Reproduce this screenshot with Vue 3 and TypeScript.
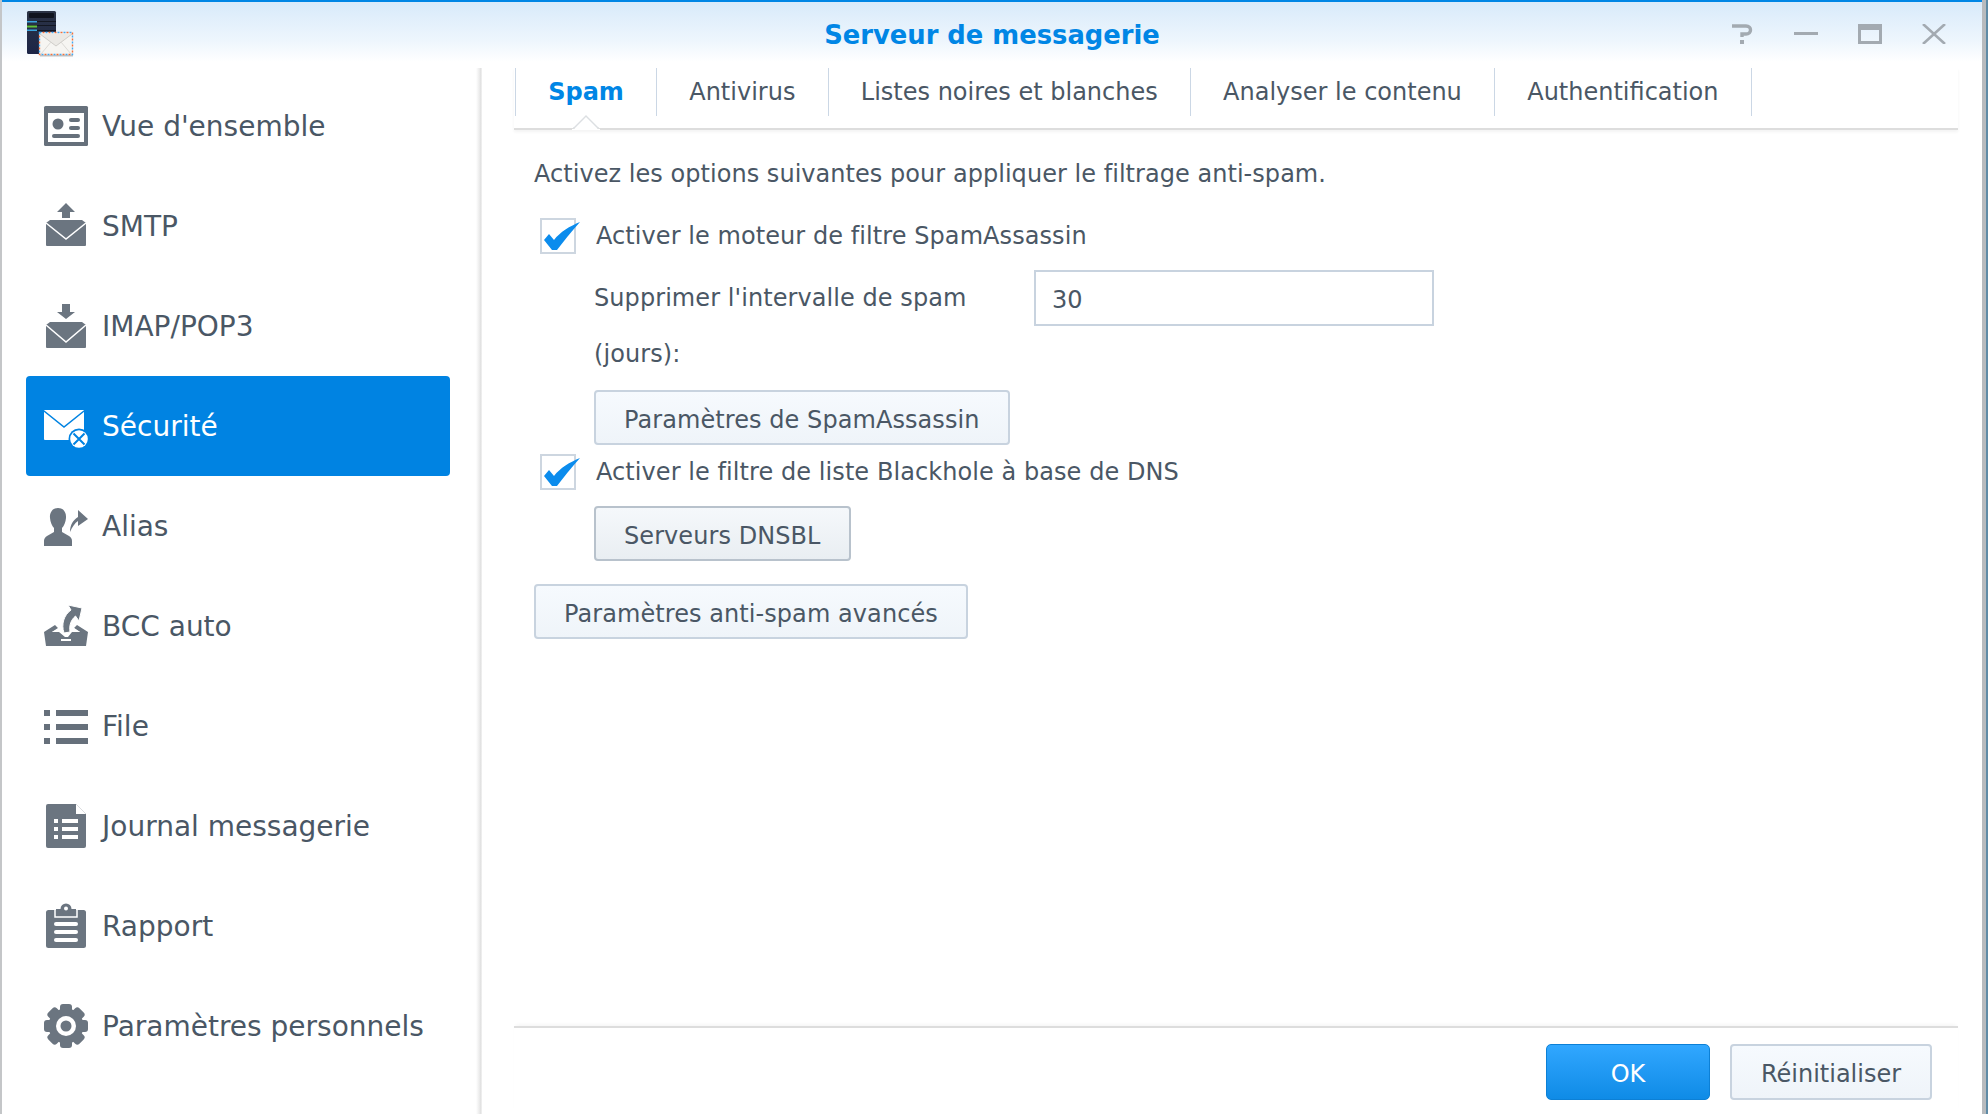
<script setup lang="ts">
interface NavItem { id: string; label: string }
const navItems: NavItem[] = [
  { id: 'overview', label: "Vue d'ensemble" },
  { id: 'smtp', label: 'SMTP' },
  { id: 'imap', label: 'IMAP/POP3' },
  { id: 'security', label: 'Sécurité' },
  { id: 'alias', label: 'Alias' },
  { id: 'bcc', label: 'BCC auto' },
  { id: 'queue', label: 'File' },
  { id: 'log', label: 'Journal messagerie' },
  { id: 'report', label: 'Rapport' },
  { id: 'settings', label: 'Paramètres personnels' },
]
const tabs: string[] = ['Spam', 'Antivirus', 'Listes noires et blanches', 'Analyser le contenu', 'Authentification']
</script>

<template>
  <div class="page">
    <div class="edge-left"></div>
    <div class="window">
      <header class="titlebar">
        <div class="logo-cell">
          <svg class="logo" width="48" height="46" viewBox="0 0 48 46">
            <defs>
              <linearGradient id="tower" x1="0" y1="0" x2="0" y2="1">
                <stop offset="0" stop-color="#2b3345" />
                <stop offset="1" stop-color="#1c2547" />
              </linearGradient>
            </defs>
            <rect x="1" y="0" width="29" height="43" rx="1.5" fill="url(#tower)" />
            <rect x="3" y="2" width="25" height="5" rx="1" fill="#10141f" />
            <rect x="1" y="10" width="29" height="1" fill="#131722" />
            <rect x="1" y="10" width="10" height="1.5" fill="#3ba3dd" />
            <rect x="1" y="14" width="29" height="1" fill="#131722" />
            <rect x="1" y="14.5" width="10" height="2" fill="#62c13a" />
            <rect x="1" y="19" width="29" height="1" fill="#131722" />
            <rect x="1" y="18.5" width="10" height="1.5" fill="#3ba3dd" />
            <rect x="13" y="21" width="34" height="23" fill="#f6f5f2" />
            <path d="M14 23 L30 35 L46 23" fill="#ebe9e5" stroke="#cfcdc9" stroke-width="1" />
            <path d="M15 43 L25 31 M45 43 L35 31" fill="none" stroke="#dcdad6" stroke-width="1" />
            <rect x="13.5" y="21.5" width="33" height="22" fill="none" stroke="#45a8ee" stroke-width="1.4" stroke-dasharray="2 4" />
            <rect x="13.5" y="21.5" width="33" height="22" fill="none" stroke="#f0703c" stroke-width="1.4" stroke-dasharray="2 4" stroke-dashoffset="3" />
            <rect x="14" y="44" width="33" height="1.5" fill="#8d8d8d" opacity=".5" />
          </svg>
        </div>
        <h1 class="title">Serveur de messagerie</h1>
        <div class="controls">
          <svg width="24" height="20" viewBox="0 0 24 20">
            <path d="M2 2 H16 C22 2 22 10 16 10 H12 V13" fill="none" stroke="#a3aab1" stroke-width="3.4" />
            <rect x="10" y="16" width="4" height="4" fill="#a3aab1" />
          </svg>
          <svg width="24" height="20" viewBox="0 0 24 20">
            <rect x="0" y="8" width="24" height="3" fill="#a3aab1" />
          </svg>
          <svg width="24" height="20" viewBox="0 0 24 20">
            <path d="M0 0 H24 V20 H0 Z M3 6 V17 H21 V6 Z" fill="#a3aab1" fill-rule="evenodd" />
          </svg>
          <svg width="24" height="20" viewBox="0 0 24 20">
            <path d="M1 0 L23 20 M23 0 L1 20" stroke="#a3aab1" stroke-width="2.6" fill="none" />
          </svg>
        </div>
      </header>

      <div class="body">
        <nav class="sidebar">
          <a
            v-for="item in navItems"
            :key="item.id"
            class="nav-item"
            :class="{ active: item.id === 'security' }"
          >
            <svg class="nav-icon" width="44" height="44" viewBox="0 0 44 44">
              <g v-if="item.id === 'overview'">
                <rect x="0" y="2" width="44" height="40" rx="1.5" fill="#66707b" />
                <rect x="4" y="9" width="36" height="29" fill="#fff" />
                <circle cx="14" cy="20" r="5.5" fill="#66707b" />
                <rect x="25" y="14" width="11" height="4" rx="2" fill="#66707b" />
                <rect x="25" y="22" width="11" height="4" rx="2" fill="#66707b" />
                <rect x="8" y="30" width="28" height="4" rx="2" fill="#66707b" />
              </g>
              <g v-else-if="item.id === 'smtp'">
                <path d="M22 -1 L31 8 H26 V14 H18 V8 H13 Z" fill="#6b7580" />
                <path d="M6 16 H38 L42 19 V41 a1 1 0 0 1 -1 1 H3 a1 1 0 0 1 -1 -1 V19 Z" fill="#6b7580" />
                <path d="M2 19 L22 35 L42 19" fill="none" stroke="#fff" stroke-width="1.6" />
              </g>
              <g v-else-if="item.id === 'imap'">
                <path d="M22 15 L31 8 H26 V0 H18 V8 H13 Z" fill="#6b7580" />
                <path d="M6 18 H38 L42 21 V43 a1 1 0 0 1 -1 1 H3 a1 1 0 0 1 -1 -1 V21 Z" fill="#6b7580" />
                <path d="M2 21 L22 38 L42 21" fill="none" stroke="#fff" stroke-width="1.6" />
              </g>
              <g v-else-if="item.id === 'security'">
                <rect x="0" y="6" width="40" height="30" rx="1" fill="#fff" />
                <path d="M0 7 L20 23 L40 7" fill="none" stroke="#0083e2" stroke-width="1.6" />
                <circle cx="35" cy="35" r="10.5" fill="#0083e2" />
                <circle cx="35" cy="35" r="8.8" fill="#fff" />
                <path d="M29.5 29.5 L40.5 40.5 M40.5 29.5 L29.5 40.5" stroke="#0083e2" stroke-width="2" />
              </g>
              <g v-else-if="item.id === 'alias'">
                <path d="M14 4 C20 4 22.5 9 22 14 C21.7 18 20 22 18 24 V28 L25 32 C27 33 28 35 28 37 V42 H0 V37 C0 35 1 33 3 32 L10 28 V24 C8 22 6.3 18 6 14 C5.5 9 8 4 14 4 Z" fill="#6b7580" />
                <path d="M26 28 C26 21 29 16 34 13 V6 L44 15 L34 22 V17 C31 19 28 23 26 28 Z" fill="#6b7580" />
              </g>
              <g v-else-if="item.id === 'bcc'">
                <path d="M0 28 L11 21 L14 24 L8 28 H36 L30 24 L33 21 L44 28 L42 42 H2 Z" fill="#6b7580" />
                <path d="M8 28 H15 L21 33 H24 L28 28 H36 L30 24 L15 24 Z" fill="#fff" />
                <path d="M24 1 L38 4 L35 17 L31.5 12 C27 16 25 21 26 28 L20 29 C17 20 20 11 27 6 Z" fill="#6b7580" stroke="#fff" stroke-width="1" />
                <rect x="17" y="35" width="10" height="2" fill="#fff" />
              </g>
              <g v-else-if="item.id === 'queue'" fill="#66707b">
                <rect x="0" y="6" width="6" height="6" />
                <rect x="12" y="6" width="32" height="6" />
                <rect x="0" y="20" width="6" height="6" />
                <rect x="12" y="20" width="32" height="6" />
                <rect x="0" y="34" width="6" height="6" />
                <rect x="12" y="34" width="32" height="6" />
              </g>
              <g v-else-if="item.id === 'log'">
                <path d="M4 0 H32 L42 10 V42 a2 2 0 0 1 -2 2 H4 a2 2 0 0 1 -2 -2 V2 a2 2 0 0 1 2 -2 Z" fill="#6b7580" />
                <path d="M32 0 V10 H42 Z" fill="#fff" />
                <g fill="#fff">
                  <rect x="10" y="15" width="4" height="4" />
                  <rect x="18" y="15" width="16" height="4" />
                  <rect x="10" y="23" width="4" height="4" />
                  <rect x="18" y="23" width="16" height="4" />
                  <rect x="10" y="31" width="4" height="4" />
                  <rect x="18" y="31" width="16" height="4" />
                </g>
              </g>
              <g v-else-if="item.id === 'report'">
                <rect x="2" y="6" width="40" height="38" rx="2.5" fill="#6b7580" />
                <path d="M11 6 V13 H33 V6" fill="#6b7580" stroke="#fff" stroke-width="1.5" />
                <rect x="12" y="5" width="20" height="7" fill="#6b7580" />
                <circle cx="22" cy="5" r="5.5" fill="#6b7580" />
                <circle cx="22" cy="4.5" r="2" fill="#fff" />
                <rect x="10" y="18" width="24" height="4" rx="2" fill="#fff" />
                <rect x="10" y="26" width="24" height="4" rx="2" fill="#fff" />
                <rect x="10" y="34" width="24" height="4" rx="2" fill="#fff" />
              </g>
              <g v-else>
                <g fill="#6b7580">
                  <circle cx="22" cy="22" r="17.5" />
                  <rect x="16" y="0" width="12" height="44" rx="3" />
                  <rect x="16" y="0" width="12" height="44" rx="3" transform="rotate(45 22 22)" />
                  <rect x="16" y="0" width="12" height="44" rx="3" transform="rotate(90 22 22)" />
                  <rect x="16" y="0" width="12" height="44" rx="3" transform="rotate(135 22 22)" />
                </g>
                <circle cx="22" cy="22" r="10" fill="#fff" />
                <circle cx="22" cy="22" r="5.5" fill="#6b7580" />
              </g>
            </svg>
            <span class="nav-label">{{ item.label }}</span>
          </a>
        </nav>
        <div class="sidebar-rule"></div>

        <main class="main">
          <div class="tabs">
            <div
              v-for="(tab, i) in tabs"
              :key="tab"
              class="tab"
              :class="{ 'tab-active': i === 0 }"
            >
              {{ tab }}
              <svg v-if="i === 0" class="tab-notch" width="28" height="15" viewBox="0 0 28 15">
                <path d="M0 14 H2 L14 1 L26 14 H28 V15 H0 Z" fill="#fff" />
                <path d="M1 13 H2 L14 1 L26 13 H27" fill="none" stroke="#dcdfe2" stroke-width="1.4" />
              </svg>
            </div>
          </div>

          <section class="content">
            <p class="intro">Activez les options suivantes pour appliquer le filtrage anti-spam.</p>

            <label class="check-row first">
              <span class="checkbox">
                <svg class="check" width="42" height="36" viewBox="0 0 42 36">
                  <path d="M2 20 L7 14 L12 20 C18 12 28 6 38 2 C29 12 21 22 15 30 H10 Z" fill="#0b8ced" />
                </svg>
              </span>
              <span>Activer le moteur de filtre SpamAssassin</span>
            </label>

            <div class="indent">
              <div class="field">
                <span class="field-label">Supprimer l'intervalle de spam (jours):</span>
                <input class="input" type="text" value="30" />
              </div>
              <button class="btn btn-settings" type="button">Paramètres de SpamAssassin</button>
            </div>

            <label class="check-row second">
              <span class="checkbox">
                <svg class="check" width="42" height="36" viewBox="0 0 42 36">
                  <path d="M2 20 L7 14 L12 20 C18 12 28 6 38 2 C29 12 21 22 15 30 H10 Z" fill="#0b8ced" />
                </svg>
              </span>
              <span>Activer le filtre de liste Blackhole à base de DNS</span>
            </label>

            <div class="indent">
              <button class="btn btn-dark btn-dnsbl" type="button">Serveurs DNSBL</button>
            </div>

            <button class="btn btn-advanced" type="button">Paramètres anti-spam avancés</button>
          </section>

          <footer class="footer">
            <button class="btn btn-primary" type="button">OK</button>
            <button class="btn btn-reset" type="button">Réinitialiser</button>
          </footer>
        </main>
      </div>
    </div>
    <div class="edge-right"></div>
  </div>
</template>

<style scoped>
.page {
  display: flex;
  width: 1988px;
  height: 1114px;
  overflow: hidden;
  background: #fff;
  font-family: "DejaVu Sans", Verdana, sans-serif;
  color: #4a5765;
}
.edge-left {
  width: 2px;
  flex: none;
  background: #c4c6c8;
}
.edge-right {
  width: 6px;
  flex: none;
  background: linear-gradient(90deg, #b8bbbe 0 4px, #5f8ba6 4px);
}
.window {
  flex: 1;
  min-width: 0;
  display: flex;
  flex-direction: column;
  background: #fff;
}
.titlebar {
  flex: none;
  height: 62px;
  box-sizing: border-box;
  border-top: 2px solid #0086e5;
  padding-top: 4px;
  display: grid;
  grid-template-columns: 1fr auto 1fr;
  align-items: center;
  background: linear-gradient(180deg, #d8eafa 0%, #eef6fd 65%, #ffffff 100%);
}
.logo-cell {
  padding-left: 24px;
  align-self: start;
}
.logo {
  display: block;
  margin-top: 5px;
}
.title {
  margin: 0;
  padding-top: 1px;
  font-size: 25.8px;
  line-height: 32px;
  font-weight: 700;
  color: #0086e5;
}
.controls {
  display: flex;
  justify-content: flex-end;
  gap: 40px;
  padding-right: 36px;
}
.controls svg {
  display: block;
}
.body {
  flex: 1;
  min-height: 0;
  display: flex;
}
.sidebar {
  flex: none;
  width: 474px;
  box-sizing: border-box;
  padding: 14px 0 0 24px;
}
.nav-item {
  width: 424px;
  height: 100px;
  box-sizing: border-box;
  display: flex;
  align-items: center;
  gap: 14px;
  padding-left: 18px;
  border-radius: 4px;
  font-size: 28px;
  color: #4a5765;
}
.nav-item.active {
  background: #0083e2;
  color: #fff;
}
.nav-icon {
  flex: none;
  margin-left: 0;
  overflow: visible;
}
.nav-label {
  white-space: nowrap;
}
.sidebar-rule {
  flex: none;
  width: 6px;
  margin-top: 6px;
  background: linear-gradient(90deg, #ffffff 0%, #ececec 55%, #dedede 85%, #ffffff 100%);
}
.main {
  flex: 1;
  min-width: 0;
  display: flex;
  flex-direction: column;
  padding: 6px 24px 0 32px;
}
.tabs {
  flex: none;
  display: flex;
  height: 60px;
  box-sizing: content-box;
  border-bottom: 2px solid #dddddd;
  box-shadow: 0 2px 3px rgba(0, 0, 0, 0.05);
  font-size: 24px;
  padding-left: 1px;
}
.tab {
  position: relative;
  height: 48px;
  box-sizing: border-box;
  padding: 0 32.2px;
  display: flex;
  align-items: center;
  border-right: 1px solid #cbd7e5;
  white-space: nowrap;
}
.tab:first-child {
  border-left: 1px solid #cbd7e5;
}
.tab-active {
  font-weight: 700;
  color: #0086e5;
}
.tab-notch {
  position: absolute;
  left: 50%;
  bottom: -14px;
  margin-left: -14px;
}
.content {
  flex: 1;
  padding-left: 20px;
  font-size: 24px;
  letter-spacing: 0.07px;
  display: flex;
  flex-direction: column;
  align-items: flex-start;
}
.intro {
  margin: 30px 0 0;
  line-height: 28px;
  letter-spacing: 0.04px;
}
.check-row {
  display: flex;
  align-items: center;
  gap: 20px;
  margin-left: 6px;
  line-height: 36px;
}
.check-row.first {
  margin-top: 30px;
}
.check-row.second {
  margin-top: 9px;
}
.checkbox {
  position: relative;
  flex: none;
  width: 36px;
  height: 36px;
  box-sizing: border-box;
  border: 2px solid #cdd6e0;
  background: #fff;
}
.check {
  position: absolute;
  left: 0;
  top: 0;
}
.indent {
  margin-left: 60px;
}
.field {
  display: flex;
  margin-top: 15px;
}
.field-label {
  width: 400px;
  margin-right: 40px;
  padding-top: 1px;
  line-height: 56px;
}
.input {
  width: 400px;
  height: 56px;
  margin-top: 1px;
  box-sizing: border-box;
  border: 2px solid #c8d3df;
  padding: 4px 16px 0;
  font: inherit;
  letter-spacing: inherit;
  color: inherit;
  background: #fff;
  outline: none;
}
.btn {
  display: block;
  height: 55px;
  box-sizing: border-box;
  padding: 4px 28px 0;
  border: 2px solid #c8d3df;
  border-radius: 4px;
  background: linear-gradient(180deg, #f6fafe 0%, #eff4f9 100%);
  font: inherit;
  font-size: 24px;
  letter-spacing: inherit;
  color: inherit;
  white-space: nowrap;
}
.btn-settings {
  margin-top: 8px;
}
.btn-dnsbl {
  margin-top: 16px;
}
.btn-dark {
  border-color: #b8c2cc;
  background: linear-gradient(180deg, #f5f8fb 0%, #e9eef2 100%);
}
.btn-advanced {
  margin-top: 23px;
}
.footer {
  flex: none;
  display: flex;
  justify-content: flex-end;
  gap: 20px;
  padding: 16px 26px 14px 0;
  border-top: 2px solid #dddddd;
  box-shadow: 0 -3px 4px -2px rgba(0, 0, 0, 0.05);
}
.btn-primary {
  width: 164px;
  height: 56px;
  padding: 4px 0 0;
  border: 1px solid #0c80d6;
  border-radius: 5px;
  background: linear-gradient(180deg, #31a7ff 0%, #0f8be6 100%);
  color: #fff;
}
.btn-reset {
  width: 202px;
  height: 56px;
  padding: 4px 0 0;
}
</style>
